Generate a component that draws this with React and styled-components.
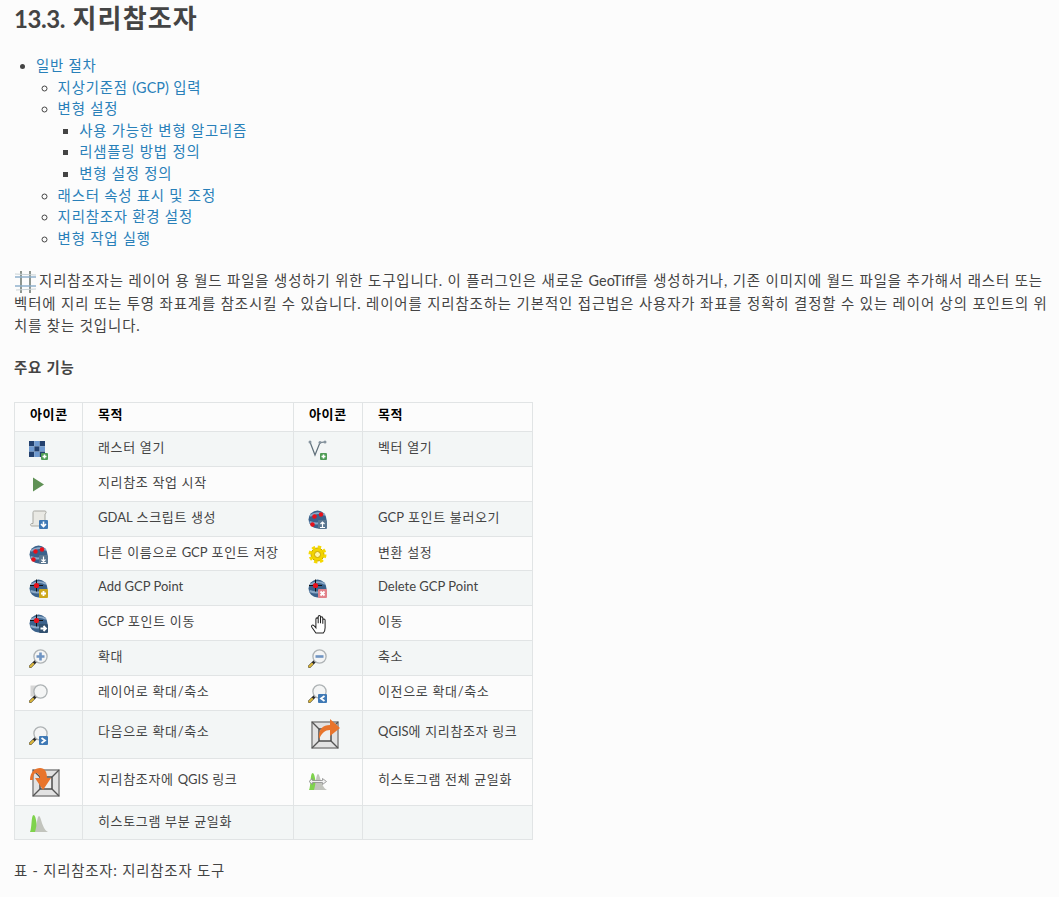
import React from "react";
import styled, { createGlobalStyle } from "styled-components";

const GlobalStyle = createGlobalStyle`
 body {
  margin: 0;
  background: #fcfcfc;
  color: #444;
  font-family: Lato, "Noto Sans CJK KR", sans-serif;
  font-size: 14.4px;
  line-height: 21.6px;
  letter-spacing: 0.8px;
 }
`;

const Page = styled.div`
 padding: 0 10px 0 14px;
`;

const Title = styled.h1`
 margin: 0 0 18px;
 font-size: 26px;
 line-height: 36px;
 font-weight: 700;
 letter-spacing: 1.1px;
`;

const TitleNumber = styled.span`
 font-size: 24px;
 letter-spacing: -0.4px;
`;

// latin runs keep their natural width, only the hangul is spaced out
const Latin = styled.span`
 letter-spacing: 0;
`;

const List = styled.ul`
 margin: ${p => (p.$top ? "0 0 21px" : "0")};
 padding: 0 0 0 ${p => (p.$top ? "22px" : "21.6px")};
 list-style: ${p => p.$kind};
`;

const Link = styled.a`
 color: #2980b9;
 text-decoration: none;
`;

const Paragraph = styled.p`
 margin: 0 0 ${p => p.$after || 20}px;
`;

const Intro = styled(Paragraph)`
 letter-spacing: 0.9px;
`;

const Table = styled.table`
 width: 519px;
 table-layout: fixed;
 border-collapse: collapse;
 margin-bottom: 20px;
 font-size: 13px;
 letter-spacing: 0.65px;
 white-space: nowrap;
`;

const HeadCell = styled.th`
 border: 1px solid #e1e4e5;
 padding: 1px 0 0 15px;
 height: 27px;
 color: #000;
 font-weight: 700;
 text-align: left;
 vertical-align: top;
 background: #fcfcfc;
`;

const Row = styled.tr`
 height: ${p => p.$height}px;
 background: ${p => (p.$odd ? "#f3f6f6" : "#fcfcfc")};
`;

const Cell = styled.td`
 border: 1px solid #e1e4e5;
 padding: ${p => p.$top || 5}px 0 5px 15px;
 vertical-align: top;
`;

const IconCell = styled(Cell)`
 padding: ${p => p.$top || 8}px 0 0 14px;
`;

const Svg = styled.svg`
 display: block;
`;

const InlineSvg = styled.svg`
 vertical-align: -7px;
 margin: 0 3px 0 1px;
`;

const Col = styled.col`
 width: ${p => p.$w}px;
`;

const Icon = ({ size = 20, children }) => (
 <Svg width={size} height={size} viewBox={`0 0 ${size} ${size}`}>{children}</Svg>
);

const Badge = ({ fill, children }) => (
 <g>
  <rect x="10" y="10" width="9" height="9" rx="1" fill={fill} />
  {children}
 </g>
);

const GreenPlus = () => (
 <g>
  <rect x="12" y="13" width="7" height="7" rx="1" fill="#4f9c56" />
  <path d="M15.5 14.5v4M13.5 16.5h4" stroke="#fff" strokeWidth="1.6" />
 </g>
);

const Globe = ({ dots }) => (
 <g>
  <circle cx="9.500" cy="9.500" r="9" fill="#3b628c" />
  <path d="M2 6c4-3 10-4 15-1M1.500 12c5 2 11 2 16-1" stroke="#8aa8c6" strokeWidth="2" fill="none" />
  {dots ? (
   <g fill="#e8101a">
    <circle cx="6.500" cy="6.500" r="2.200" />
    <circle cx="13" cy="4.500" r="2.200" />
    <circle cx="4.500" cy="14.500" r="2.200" />
   </g>
  ) : (
   <g>
    <path d="M7.500 0.500v12M1 6.500h13" stroke="#111" strokeWidth="1" />
    <circle cx="7.500" cy="6.500" r="2.600" fill="#e8101a" />
   </g>
  )}
 </g>
);

const Lens = ({ children }) => (
 <g>
  <path d="M7 12 1.500 17.500" stroke="#2a2a2a" strokeWidth="3" strokeLinecap="round" />
  <path d="M4 15 1.500 17.500" stroke="#d9b53c" strokeWidth="2.400" strokeLinecap="round" />
  <circle cx="11.500" cy="7.500" r="6.600" fill="#f4f5f5" stroke="#aeb3b5" strokeWidth="1.300" />
  {children}
 </g>
);

const Frame = ({ children, x = 3, y = 2 }) => (
 <g transform={`translate(${x} ${y})`}>
  <rect x="1" y="1" width="26" height="26" fill="#e2e2e2" stroke="#8b8b8b" strokeWidth="1.600" />
  <rect x="8" y="8" width="12" height="12" fill="#efefef" stroke="#444" strokeWidth="1.400" />
  <path d="M1 1l7 7M27 1l-7 7M1 27l7-7M27 27l-7-7" stroke="#555" strokeWidth="1.400" />
  {children}
 </g>
);

const Histogram = () => (
 <g>
  <path d="M1 18C3 14 2 2 4.500 1c3 0 3 13 5 17z" fill="#7fd34c" />
  <path d="M6 18C8 12 8 2 10 2c2 0 3 13 9 16z" fill="#c2c4bd" />
 </g>
);

const icons = {
 raster: (
  <Icon>
   {[0, 1, 2].flatMap(r => [0, 1, 2].map(c => (
    <rect key={`${r}${c}`} x={c * 5.33} y={1 + r * 5.33} width="5.33" height="5.33" fill={(r + c) % 2 ? "#6f9ad0" : "#22406e"} />
   )))}
   <GreenPlus />
  </Icon>
 ),
 vector: (
  <Icon>
   <path d="M2 2 7 15 12 2.500 17 2" stroke="#5f6f7a" strokeWidth="1.200" fill="none" />
   <circle cx="2" cy="2" r="1.500" fill="#8795a0" />
   <circle cx="12" cy="2.500" r="1.500" fill="#8795a0" />
   <circle cx="17" cy="2" r="1.500" fill="#8795a0" />
   <GreenPlus />
  </Icon>
 ),
 play: (
  <Icon>
   <path d="M4 2.500v14l11-7z" fill="#5f9155" />
  </Icon>
 ),
 script: (
  <Icon>
   <path d="M4 2.500C4 1 5 1 6 1h10c1.500 0 1.500 2.500 0 3v12H3c-2 0-2-2.500 0-2.500h1z" fill="#e9e9e4" stroke="#a8a8a2" />
   <Badge fill="#3f79b5"><path d="M14.500 11.500v5M12 14l2.500 2.500L17 14" stroke="#fff" strokeWidth="1.600" fill="none" /></Badge>
  </Icon>
 ),
 load: (
  <Icon>
   <Globe dots />
   <Badge fill="#5a7690"><path d="M14.500 17v-5M12.500 14l2-2 2 2M12 17.500h5" stroke="#fff" strokeWidth="1.200" fill="none" /></Badge>
  </Icon>
 ),
 save: (
  <Icon>
   <Globe dots />
   <Badge fill="#5a7690"><path d="M14.500 11.500v5M12.500 14.500l2 2 2-2M12 17.500h5" stroke="#fff" strokeWidth="1.200" fill="none" /></Badge>
  </Icon>
 ),
 gear: (
  <Icon>
   <circle cx="9.500" cy="9.500" r="6.500" fill="#f2d400" stroke="#c8a400" />
   <circle cx="9.500" cy="9.500" r="7.500" fill="none" stroke="#f5d800" strokeWidth="3" strokeDasharray="3.300 2.600" />
   <circle cx="9.500" cy="9.500" r="3" fill="#fff6a8" stroke="#c8a400" />
  </Icon>
 ),
 add: (
  <Icon>
   <Globe />
   <Badge fill="#cda81e"><path d="M14.500 12v5M12 14.500h5" stroke="#fff" strokeWidth="1.800" /></Badge>
  </Icon>
 ),
 remove: (
  <Icon>
   <Globe />
   <Badge fill="#e2828a"><path d="M12.500 12.500l4 4M16.500 12.500l-4 4" stroke="#fff" strokeWidth="1.800" /></Badge>
  </Icon>
 ),
 move: (
  <Icon>
   <Globe />
   <Badge fill="#31506f"><path d="M11.500 14.500h5M14.500 12 17 14.500l-2.500 2.500" stroke="#fff" strokeWidth="1.800" fill="none" /></Badge>
  </Icon>
 ),
 hand: (
  <Icon>
   <g transform="translate(1 0) scale(1.150)">
    <path
     d="M6 16.500 2.500 11.500C1.500 10 3 9 4.200 10L6 12V4.500c0-1.500 2-1.500 2 0V8V2.500c0-1.500 2-1.500 2 0V8V3.500c0-1.500 2-1.500 2 0V8.500V5.500c0-1.500 2-1.500 2 0V12c0 2-.5 3.500-1.500 4.500z"
     fill="#fff"
     stroke="#222"
     strokeWidth=".9"
    />
   </g>
  </Icon>
 ),
 zoomIn: (
  <Icon>
   <Lens><path d="M11.500 3.500v8M7.500 7.500h8" stroke="#6f94c2" strokeWidth="2.600" /></Lens>
  </Icon>
 ),
 zoomOut: (
  <Icon>
   <Lens><path d="M7.500 7.500h8" stroke="#6f94c2" strokeWidth="2.600" /></Lens>
  </Icon>
 ),
 zoomLayer: (
  <Icon>
   <rect x="1.500" y="1.500" width="9" height="11" fill="#d6d6d6" />
   <Lens />
  </Icon>
 ),
 zoomLast: (
  <Icon>
   <Lens />
   <Badge fill="#3f79b5"><path d="M16.500 12 13 14.500l3.500 2.500" stroke="#fff" strokeWidth="1.800" fill="none" /></Badge>
  </Icon>
 ),
 zoomNext: (
  <Icon>
   <Lens />
   <Badge fill="#3f79b5"><path d="M12.500 12 16 14.500 12.500 17" stroke="#fff" strokeWidth="1.800" fill="none" /></Badge>
  </Icon>
 ),
 linkQgis: (
  <Icon size={34}>
   <Frame />
   <path d="M11 20C10 10 15 6 22 6V0L32 9 22 17V11C17 11 14 14 11 20z" fill="#e8742c" />
  </Icon>
 ),
 linkGeoref: (
  <Icon size={34}>
   <Frame />
   <path d="M1 13C1 5 6 1 11 1c5 0 7 4 7 10h4L14 23 6 11h5C11 8 9 6 7 6 5 6 4 9 4 13z" fill="#e8742c" />
  </Icon>
 ),
 histFull: (
  <Icon>
   <Histogram />
   <path d="M1 9.500 4.500 6.500v2h10v-2l4 3-4 3v-2h-10v2z" fill="#f1f1f1" stroke="#8a8a8a" strokeWidth=".8" />
  </Icon>
 ),
 histPart: (
  <Icon><Histogram /></Icon>
 ),
};

const rows = [
 { h: 34.8, a: "raster", at: "래스터 열기", b: "vector", bt: "벡터 열기" },
 { h: 34.8, a: "play", at: "지리참조 작업 시작" },
 { h: 34.8, a: "script", at: <><Latin>GDAL</Latin> 스크립트 생성</>, b: "load", bt: <><Latin>GCP</Latin> 포인트 불러오기</> },
 { h: 34.8, a: "save", at: <>다른 이름으로 <Latin>GCP</Latin> 포인트 저장</>, b: "gear", bt: "변환 설정" },
 { h: 34.8, a: "add", at: <Latin>Add GCP Point</Latin>, b: "remove", bt: <Latin>Delete GCP Point</Latin> },
 { h: 34.8, a: "move", at: <><Latin>GCP</Latin> 포인트 이동</>, b: "hand", bt: "이동" },
 { h: 34.8, a: "zoomIn", at: "확대", b: "zoomOut", bt: "축소" },
 { h: 34.8, a: "zoomLayer", at: "레이어로 확대/축소", b: "zoomLast", bt: "이전으로 확대/축소" },
 { h: 48, text: 10, aTop: 15, a: "zoomNext", at: "다음으로 확대/축소", b: "linkQgis", bt: <><Latin>QGIS</Latin>에 지리참조자 링크</> },
 { h: 47, text: 10, bTop: 13, a: "linkGeoref", at: <>지리참조자에 <Latin>QGIS</Latin> 링크</>, b: "histFull", bt: "히스토그램 전체 균일화" },
 { h: 34.8, a: "histPart", at: "히스토그램 부분 균일화" },
];

const GeorefIcon = () => (
 <InlineSvg width="21" height="22" viewBox="0 0 21 22">
  <path d="M6 0v22M15 0v22" stroke="#5f6b63" strokeWidth="1.400" />
  <path d="M0 6h21M0 15h21" stroke="#8fb0cc" strokeWidth="1.600" />
  <path d="M0 3l21 1M1 19l20-1" stroke="#c9d2d6" strokeWidth="1" />
 </InlineSvg>
);

const App = () => (
 <Page>
  <GlobalStyle />
  <Title><TitleNumber>13.3.</TitleNumber> 지리참조자</Title>
  <List $top $kind="disc">
   <li>
    <Link href="#">일반 절차</Link>
    <List $kind="circle">
     <li><Link href="#">지상기준점 <Latin>(GCP)</Latin> 입력</Link></li>
     <li>
      <Link href="#">변형 설정</Link>
      <List $kind="square">
       <li><Link href="#">사용 가능한 변형 알고리즘</Link></li>
       <li><Link href="#">리샘플링 방법 정의</Link></li>
       <li><Link href="#">변형 설정 정의</Link></li>
      </List>
     </li>
     <li><Link href="#">래스터 속성 표시 및 조정</Link></li>
     <li><Link href="#">지리참조자 환경 설정</Link></li>
     <li><Link href="#">변형 작업 실행</Link></li>
    </List>
   </li>
  </List>
  <Intro>
   <GeorefIcon />지리참조자는 레이어 용 월드 파일을 생성하기 위한 도구입니다. 이 플러그인은 새로운 <Latin>GeoTiff</Latin>를 생성하거나, 기존 이미지에 월드 파일을 추가해서 래스터 또는 벡터에 지리 또는 투영 좌표계를 참조시킬 수 있습니다. 레이어를 지리참조하는 기본적인 접근법은 사용자가 좌표를 정확히 결정할 수 있는 레이어 상의 포인트의 위치를 찾는 것입니다.
  </Intro>
  <Paragraph $after={24}><strong>주요 기능</strong></Paragraph>
  <Table>
   <colgroup>
    <Col $w={68} /><Col $w={211} /><Col $w={69} /><Col $w={170} />
   </colgroup>
   <thead>
    <tr>
     <HeadCell>아이콘</HeadCell>
     <HeadCell>목적</HeadCell>
     <HeadCell>아이콘</HeadCell>
     <HeadCell>목적</HeadCell>
    </tr>
   </thead>
   <tbody>
    {rows.map((r, i) => (
     <Row key={r.a} $height={r.h} $odd={i % 2 === 0}>
      <IconCell $top={r.aTop}>{icons[r.a]}</IconCell>
      <Cell $top={r.text}>{r.at}</Cell>
      <IconCell $top={r.bTop}>{r.b && icons[r.b]}</IconCell>
      <Cell $top={r.text}>{r.bt}</Cell>
     </Row>
    ))}
   </tbody>
  </Table>
  <Paragraph>표 - 지리참조자: 지리참조자 도구</Paragraph>
 </Page>
);

export default App;
